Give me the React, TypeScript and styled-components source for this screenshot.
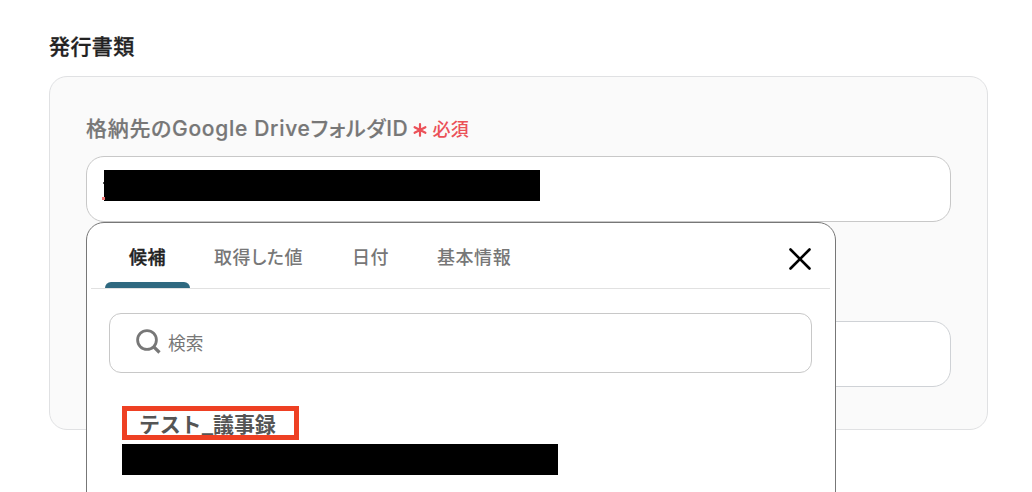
import React, { useState } from "react";
import styled, { createGlobalStyle } from "styled-components";

const GlobalStyle = createGlobalStyle`
  * {
    box-sizing: border-box;
  }
  body {
    margin: 0;
    height: 492px;
    overflow: hidden;
    background: #fff;
    font-family: Inter, "Noto Sans CJK JP", sans-serif;
  }
`;

const Page = styled.main`
  width: 1032px;
  height: 492px;
  padding: 32px 44px 0 49px;
  overflow: hidden;
`;
const Title = styled.h2`
  margin: 0 0 14px;
  height: 30px;
  line-height: 30px;
  font-size: 21px;
  font-weight: 500;
  letter-spacing: 0.4px;
  color: #222;
  -webkit-text-stroke: 0.3px #222;
`;
const Card = styled.section`
  display: flex;
  flex-direction: column;
  width: 939px;
  height: 354px;
  padding: 36px;
  border: 1px solid #e0e1e3;
  border-radius: 18px;
  background: #fafafa;
`;
const Label = styled.label`
  display: flex;
  align-items: center;
  height: 30px;
  margin-bottom: 13px;
  font-size: 21px;
  font-weight: 500;
  font-feature-settings: "palt";
  letter-spacing: 0.7px;
  color: #777;
`;
const LabelText = styled.span`
  height: 30px;
  line-height: 31px;
  -webkit-text-stroke: 0.2px currentColor;
`;
const Required = styled.span`
  display: flex;
  align-items: center;
  gap: 5px;
  margin-left: 5px;
  font-size: 18px;
  letter-spacing: 0.4px;
  color: #eb5158;

  svg {
    margin-top: 3px;
  }
`;
const Field = styled.div`
  position: relative;
  width: 865px;
  height: 66px;
  padding: 13px 17px;
  border: 1px solid #c8c8c8;
  border-radius: 18px;
  background: #fff;
`;
const SecondField = styled(Field)`
  margin-top: 99px;
  border-color: #cfd2d6;
`;
const Redacted = styled.div`
  width: 436px;
  height: 31px;
  background: #000;
`;
// misspelling underline that sticks out before the hidden value
const SpellMark = styled.span`
  position: absolute;
  left: 15px;
  top: 40px;
  width: 3px;
  height: 3px;
  background: #ed7474;
`;
const TextMark = styled(SpellMark)`
  left: 16px;
  top: 25px;
  width: 1px;
  height: 2px;
  background: #555;
`;
const Popup = styled.div`
  position: absolute;
  z-index: 1;
  left: -1px;
  top: 65px;
  width: 750px;
  height: 300px;
  padding: 0 4px;
  border: 1px solid #777;
  border-radius: 18px 18px 0 0;
  background: #fff;
`;
const TabBar = styled.div`
  display: flex;
  align-items: center;
  width: 739px;
  height: 66px;
  padding: 0 19px 0 14px;
  border-bottom: 1px solid #e1e1e1;
`;
const Tab = styled.button<{ $active: boolean; $width: number }>`
  position: relative;
  width: ${({ $width }) => $width}px;
  height: 65px;
  padding: 2px 0 0 24px;
  border: none;
  background: none;
  font-family: inherit;
  font-size: 18px;
  font-weight: 500;
  font-feature-settings: "palt";
  line-height: 65px;
  letter-spacing: 0.55px;
  text-align: left;
  white-space: nowrap;
  color: ${({ $active }) => ($active ? "#222" : "#777")};
  -webkit-text-stroke: ${({ $active }) => ($active ? 0.4 : 0)}px currentColor;
  cursor: pointer;

  &::after {
    content: "";
    display: ${({ $active }) => ($active ? "block" : "none")};
    position: absolute;
    left: 0;
    bottom: 0;
    width: 85px;
    height: 6px;
    border-radius: 6px 6px 0 0;
    background: #2f6980;
  }
`;
const CloseButton = styled.button`
  display: flex;
  margin: 7px 0 0 auto;
  padding: 0;
  border: none;
  background: none;
  cursor: pointer;
`;
const SearchBox = styled.div`
  display: flex;
  align-items: center;
  width: 703px;
  height: 60px;
  margin: 24px 0 0 18px;
  padding-left: 26px;
  border: 1px solid #c8c8c8;
  border-radius: 12px;

  svg {
    margin-top: -3px;
  }
`;
const SearchInput = styled.input`
  flex: 1;
  margin: 0 20px 0 7px;
  padding: 0;
  border: none;
  outline: none;
  font-family: inherit;
  font-size: 17.7px;
  color: #777;

  &::placeholder {
    color: #777;
    opacity: 1;
  }
`;
const Candidates = styled.div`
  display: flex;
  flex-direction: column;
  gap: 4px;
  margin: 33px 0 0 31px;
`;
const Candidate = styled.div`
  width: 177px;
  height: 34px;
  padding-left: 12px;
  border: 5px solid #ee4023;
  font-family: "Noto Sans CJK JP", sans-serif;
  font-size: 21px;
  font-weight: 700;
  line-height: 24px;
  letter-spacing: -0.2px;
  white-space: nowrap;
  color: #555;
`;

const tabs = [
  { name: "候補", width: 85 },
  { name: "取得した値", width: 138 },
  { name: "日付", width: 85 },
  { name: "基本情報", width: 122 },
];

const App = () => {
  const [activeTab, setActiveTab] = useState("候補");
  const [search, setSearch] = useState("");

  return (
    <>
      <GlobalStyle />
      <Page>
        <Title>発行書類</Title>
        <Card>
          <Label>
            <LabelText>格納先のGoogle DriveフォルダID</LabelText>
            <Required>
              <svg width="14" height="14" viewBox="0 0 14 14">
                <path
                  d="M7 1.2v11.6M1.6 4.2l10.8 5.6M12.4 4.2L1.6 9.8"
                  stroke="currentColor"
                  strokeWidth="2.2"
                  strokeLinecap="round"
                />
              </svg>
              必須
            </Required>
          </Label>
          <Field>
            <TextMark />
            <SpellMark />
            <Redacted />
            <Popup>
              <TabBar>
                {tabs.map((tab) => (
                  <Tab
                    key={tab.name}
                    $active={tab.name === activeTab}
                    $width={tab.width}
                    onClick={() => setActiveTab(tab.name)}
                  >
                    {tab.name}
                  </Tab>
                ))}
                <CloseButton>
                  <svg width="22" height="22" viewBox="0 0 22 22">
                    <path
                      d="M1.5 1.5l19 19M20.5 1.5l-19 19"
                      stroke="#000"
                      strokeWidth="2.6"
                      strokeLinecap="round"
                    />
                  </svg>
                </CloseButton>
              </TabBar>
              <SearchBox>
                <svg width="25" height="26" viewBox="0 0 25 26" fill="none">
                  <circle cx="11" cy="11" r="9.4" stroke="#777" strokeWidth="2.8" />
                  <path d="M17.3 17.3l6.2 6.2" stroke="#777" strokeWidth="3.2" />
                </svg>
                <SearchInput
                  placeholder="検索"
                  value={search}
                  onChange={(e) => setSearch(e.target.value)}
                />
              </SearchBox>
              <Candidates>
                <Candidate>テスト_議事録</Candidate>
                <Redacted />
              </Candidates>
            </Popup>
          </Field>
          <SecondField />
        </Card>
      </Page>
    </>
  );
};

export default App;
